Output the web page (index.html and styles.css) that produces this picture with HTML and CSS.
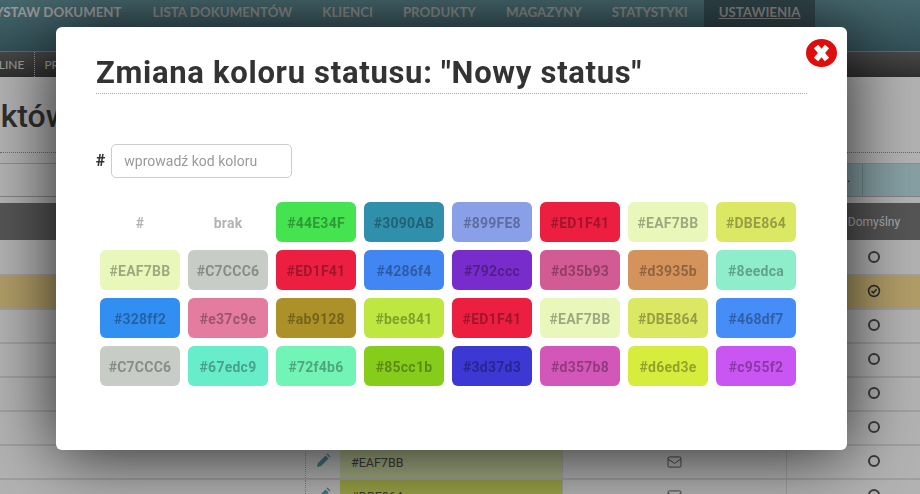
FILE: index.html
```html
<!DOCTYPE html>
<html lang="pl">
<head>
<meta charset="utf-8">
<title>Zmiana koloru statusu</title>
<link rel="stylesheet" href="styles.css">
</head>
<body>
<div class="page">
  <nav class="nav">
    <a class="nav-item first">WYSTAW DOKUMENT</a>
    <a class="nav-item">LISTA DOKUMENTÓW</a>
    <a class="nav-item">KLIENCI</a>
    <a class="nav-item">PRODUKTY</a>
    <a class="nav-item">MAGAZYNY</a>
    <a class="nav-item">STATYSTYKI</a>
    <a class="nav-item active">USTAWIENIA</a>
  </nav>
  <div class="subbar"><span class="sub-item">ONLINE</span><span class="sub-item dotted">PRODUKTY</span></div>
  <div class="heading-row"><h2 class="page-title">Lista produktów</h2></div>
  <div class="toolbar"><div class="tool-main"></div><div class="tool-side"><span class="tool-seg">.</span></div></div>
  <div class="thead"><span class="th-default">Domyślny</span></div>
  <div class="rows">
    <div class="row"><span class="c-lead"></span><span class="c-edit"></span><span class="c-color"></span><span class="c-mail"></span><span class="c-def"><i class="ring"></i></span></div>
    <div class="row gold"><span class="c-lead"></span><span class="c-edit"></span><span class="c-color"></span><span class="c-mail"></span><span class="c-def"><svg class="check" viewBox="0 0 14 14"><circle cx="7" cy="7" r="5.4" fill="none" stroke="#444" stroke-width="1.6"/><path d="M4.5 7.1 6.4 8.9 9.6 5.3" fill="none" stroke="#444" stroke-width="1.6"/></svg></span></div>
    <div class="row"><span class="c-lead"></span><span class="c-edit"></span><span class="c-color"></span><span class="c-mail"></span><span class="c-def"><i class="ring"></i></span></div>
    <div class="row"><span class="c-lead"></span><span class="c-edit"></span><span class="c-color"></span><span class="c-mail"></span><span class="c-def"><i class="ring"></i></span></div>
    <div class="row"><span class="c-lead"></span><span class="c-edit"></span><span class="c-color"></span><span class="c-mail"></span><span class="c-def"><i class="ring"></i></span></div>
    <div class="row"><span class="c-lead"></span><span class="c-edit"></span><span class="c-color"></span><span class="c-mail"></span><span class="c-def"><i class="ring"></i></span></div>
    <div class="row">
      <span class="c-lead"></span>
      <span class="c-edit"><svg class="pencil" viewBox="0 0 16 16"><path d="M1 15 1.9 10.9 10.2 2.6 13.4 5.8 5.1 14.1Z M11.2 1.6 12.3 .6 15.4 3.7 14.4 4.8Z" fill="#5fa6b6"/></svg></span>
      <span class="c-color yellow">#EAF7BB</span>
      <span class="c-mail"><svg class="mail" viewBox="0 0 16 13"><rect x="1" y="1" width="14" height="11" rx="1.4" fill="none" stroke="#555" stroke-width="1"/><path d="M1.2 3.4 8 8 14.8 3.4" fill="none" stroke="#555" stroke-width="1"/></svg></span>
      <span class="c-def"><i class="ring"></i></span>
    </div>
    <div class="row">
      <span class="c-lead"></span>
      <span class="c-edit"><svg class="pencil" viewBox="0 0 16 16"><path d="M1 15 1.9 10.9 10.2 2.6 13.4 5.8 5.1 14.1Z M11.2 1.6 12.3 .6 15.4 3.7 14.4 4.8Z" fill="#5fa6b6"/></svg></span>
      <span class="c-color olive">#DBE864</span>
      <span class="c-mail"><svg class="mail" viewBox="0 0 16 13"><rect x="1" y="1" width="14" height="11" rx="1.4" fill="none" stroke="#555" stroke-width="1"/><path d="M1.2 3.4 8 8 14.8 3.4" fill="none" stroke="#555" stroke-width="1"/></svg></span>
      <span class="c-def"><i class="ring"></i></span>
    </div>
  </div>
</div>

<div class="overlay"></div>

<section class="modal">
  <button class="close" type="button" aria-label="Zamknij">
    <svg viewBox="0 0 31 28"><ellipse cx="15.5" cy="14" rx="15.5" ry="14" fill="#e00d0d"/><path d="M10 7.5 21 20.5 M21 7.5 10 20.5" fill="none" stroke="#fff" stroke-width="5.6"/></svg>
  </button>
  <h1 class="modal-title">Zmiana koloru statusu: "Nowy status"</h1>
  <div class="code-row">
    <label class="hash" for="kod">#</label>
    <input class="code-input" id="kod" type="text" placeholder="wprowadź kod koloru">
  </div>
  <div class="swatches">
    <span class="sw plain">#</span>
    <span class="sw plain">brak</span>
    <span class="sw" style="background:#44E34F">#44E34F</span>
    <span class="sw" style="background:#3090AB">#3090AB</span>
    <span class="sw" style="background:#899FE8">#899FE8</span>
    <span class="sw" style="background:#ED1F41">#ED1F41</span>
    <span class="sw" style="background:#EAF7BB">#EAF7BB</span>
    <span class="sw" style="background:#DBE864">#DBE864</span>
    <span class="sw" style="background:#EAF7BB">#EAF7BB</span>
    <span class="sw" style="background:#C7CCC6">#C7CCC6</span>
    <span class="sw" style="background:#ED1F41">#ED1F41</span>
    <span class="sw" style="background:#4286f4">#4286f4</span>
    <span class="sw" style="background:#792ccc">#792ccc</span>
    <span class="sw" style="background:#d35b93">#d35b93</span>
    <span class="sw" style="background:#d3935b">#d3935b</span>
    <span class="sw" style="background:#8eedca">#8eedca</span>
    <span class="sw" style="background:#328ff2">#328ff2</span>
    <span class="sw" style="background:#e37c9e">#e37c9e</span>
    <span class="sw" style="background:#ab9128">#ab9128</span>
    <span class="sw" style="background:#bee841">#bee841</span>
    <span class="sw" style="background:#ED1F41">#ED1F41</span>
    <span class="sw" style="background:#EAF7BB">#EAF7BB</span>
    <span class="sw" style="background:#DBE864">#DBE864</span>
    <span class="sw" style="background:#468df7">#468df7</span>
    <span class="sw" style="background:#C7CCC6">#C7CCC6</span>
    <span class="sw" style="background:#67edc9">#67edc9</span>
    <span class="sw" style="background:#72f4b6">#72f4b6</span>
    <span class="sw" style="background:#85cc1b">#85cc1b</span>
    <span class="sw" style="background:#3d37d3">#3d37d3</span>
    <span class="sw" style="background:#d357b8">#d357b8</span>
    <span class="sw" style="background:#d6ed3e">#d6ed3e</span>
    <span class="sw" style="background:#c955f2">#c955f2</span>
  </div>
</section>
</body>
</html>
```
FILE: styles.css
```css
* { box-sizing: border-box; }
html, body { margin: 0; height: 100%; overflow: hidden; }
body { font-family: "Roboto", "Liberation Sans", sans-serif; background: #fff; }

.page { width: 920px; height: 494px; overflow: hidden; }

.nav {
  height: 52px;
  display: flex;
  background: linear-gradient(#64949d, #48727c);
  border-bottom: 1px solid #8a9a9c;
}
.nav-item {
  padding: 0 15px;
  font: 700 13.3px/24px "Lato", "Liberation Sans", sans-serif;
  color: #c4c4c4;
  white-space: nowrap;
}
.nav-item.first { margin-left: -34px; padding-right: 16px; color: #dcdcdc; }
.nav-item.active {
  margin-left: 1px;
  background: #46636a;
  text-decoration: underline;
}

.subbar {
  height: 25px;
  display: flex;
  align-items: center;
  background: linear-gradient(#666, #444);
  font: 400 12px/25px "Lato", "Liberation Sans", sans-serif;
  color: #e0e0e0;
}
.sub-item { padding-right: 10px; margin-left: -20px; }
.sub-item.dotted { margin-left: 0; padding-left: 9px; border-left: 1px dotted #ddd; height: 25px; }

.heading-row { height: 76px; padding-top: 19px; background: #fff; border-bottom: 1px dotted #999; }
.page-title {
  margin: 0 0 0 -160px;
  font: 500 32px/40px "Roboto", "Liberation Sans", sans-serif;
  color: #444;
  white-space: nowrap;
}

.toolbar { height: 34px; margin-top: 10px; display: flex; border-top: 1px solid #ccc; border-bottom: 1px solid #bbb; }
.tool-main { flex: 1; background: #fff; }
.tool-side { width: 80px; background: #bfe5ea; }
.tool-seg {
  display: block;
  width: 23px;
  height: 100%;
  padding: 6px 0 0 7px;
  border-right: 1px solid #9cc4cc;
  color: #333;
  font-size: 13px;
}

.thead {
  width: 961px;
  height: 37px;
  margin-top: 6px;
  background: #7a7a7a;
  display: flex;
  justify-content: flex-end;
  align-items: center;
}
.th-default { width: 174px; text-align: center; font-size: 12px; color: #f2f2f2; }

.rows { width: 961px; margin-top: 2px; }
.row {
  height: 34px;
  display: flex;
  align-items: center;
  background: #fff;
  border-bottom: 2px solid #e4e4e4;
  font-size: 12.5px;
  color: #555;
}
.row.gold { background: #fde194; }
.c-lead { width: 305px; height: 100%; }
.c-edit { width: 35px; height: 100%; padding-bottom: 3px; display: flex; align-items: center; justify-content: center; border-left: 1px dotted #bbb; }
.c-color { width: 222px; height: 100%; display: flex; align-items: center; padding-left: 11px; }
.c-color.yellow { background: #eaf7bb; }
.c-color.olive { background: #dbe864; }
.c-mail { width: 225px; height: 100%; padding-bottom: 1px; display: flex; align-items: center; justify-content: center; border-left: 1px solid #e4e4e4; border-right: 1px solid #e4e4e4; }
.c-def { width: 174px; padding-bottom: 2px; display: flex; justify-content: center; }
.ring { display: block; width: 12px; height: 12px; border-radius: 50%; border: 2px solid #555; }
.check { display: block; width: 14px; height: 14px; }
.pencil { width: 15px; height: 15px; }
.mail { width: 15px; height: 12px; }

.overlay {
  position: fixed;
  inset: 0;
  background: rgba(0, 0, 0, .3);
}

.modal {
  position: fixed;
  left: 56px;
  top: 27px;
  width: 791px;
  height: 423px;
  background: #fff;
  border-radius: 6px;
  box-shadow: 0 4px 70px rgba(0, 0, 0, .8);
  padding: 24px 40px 0;
}
.close {
  position: absolute;
  right: 10px;
  top: 12px;
  width: 31px;
  height: 28px;
  padding: 0;
  border: 0;
  background: none;
}
.close svg { display: block; width: 100%; height: 100%; }

.modal-title {
  margin: 0;
  height: 43px;
  width: 711px;
  font: 700 31px/44px "Roboto", "Liberation Sans", sans-serif;
  letter-spacing: .7px;
  color: #333;
  border-bottom: 1px dotted #aaa;
  white-space: nowrap;
}

.code-row { display: flex; align-items: center; margin-top: 50px; gap: 6px; }
.hash { font: 900 16px/1 "Roboto", sans-serif; color: #333; }
.code-input {
  width: 181px;
  height: 34px;
  padding: 0 12px;
  border: 1px solid #ccc;
  border-radius: 5px;
  font: 400 14px "Roboto", sans-serif;
  color: #555;
  background: #fff;
}
.code-input::placeholder { color: #999; opacity: 1; }

.swatches {
  display: grid;
  grid-template-columns: repeat(8, 80px);
  grid-auto-rows: 40px;
  gap: 8px;
  margin: 24px 0 0 4px;
}
.sw {
  display: flex;
  align-items: center;
  justify-content: center;
  padding-top: 2px;
  border-radius: 6px;
  font-weight: 700;
  font-size: 14px;
  letter-spacing: .25px;
  color: rgba(0, 0, 0, .32);
}
.sw.plain { color: #b3b3b3; }
```
